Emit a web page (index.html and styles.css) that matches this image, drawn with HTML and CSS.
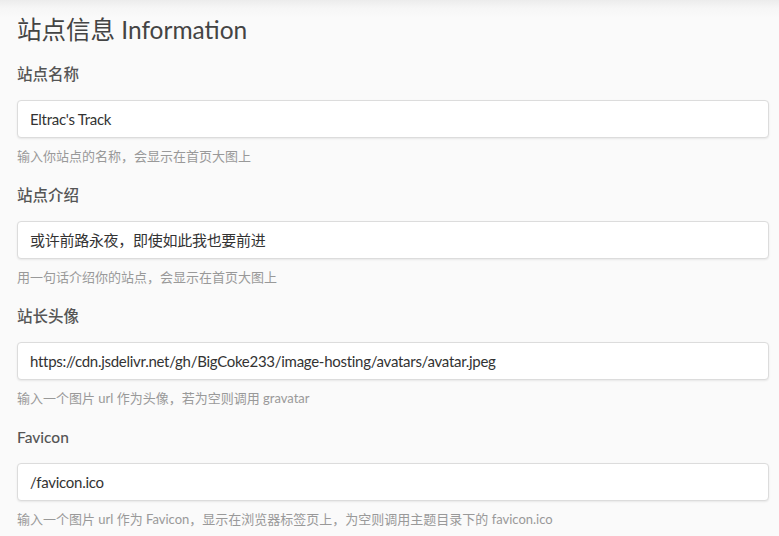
FILE: index.html
```html
<!DOCTYPE html>
<html lang="zh-CN">
<head>
<meta charset="utf-8">
<title>站点信息</title>
<link rel="stylesheet" href="styles.css">
</head>
<body>
<div class="page">
  <h1 class="title">站点信息 Information</h1>
  <div class="field">
    <div class="label">站点名称</div>
    <div class="input">Eltrac's Track</div>
    <div class="hint">输入你站点的名称，会显示在首页大图上</div>
  </div>
  <div class="field">
    <div class="label">站点介绍</div>
    <div class="input">或许前路永夜，即使如此我也要前进</div>
    <div class="hint">用一句话介绍你的站点，会显示在首页大图上</div>
  </div>
  <div class="field">
    <div class="label">站长头像</div>
    <div class="input">https://cdn.jsdelivr.net/gh/BigCoke233/image-hosting/avatars/avatar.jpeg</div>
    <div class="hint">输入一个图片 url 作为头像，若为空则调用 gravatar</div>
  </div>
  <div class="field">
    <div class="label">Favicon</div>
    <div class="input">/favicon.ico</div>
    <div class="hint">输入一个图片 url 作为 Favicon，显示在浏览器标签页上，为空则调用主题目录下的 favicon.ico</div>
  </div>
</div>
</body>
</html>
```
FILE: styles.css
```css
html, body {
  margin: 0;
  padding: 0;
}
body {
  background: #fafafa linear-gradient(to bottom, #ececec 0px, #f6f6f6 8px, #fafafa 18px) no-repeat;
  font-family: Lato, "Noto Sans CJK SC", sans-serif;
  overflow: hidden;
  height: 536px;
}
.page {
  padding: 14px 10px 0 17px;
}
.title {
  margin: 0 0 18px 0;
  font-size: 24.5px;
  line-height: 32px;
  font-weight: 400;
  color: #444;
}
.field {
  margin-bottom: 19px;
}
.label {
  font-size: 15.5px;
  line-height: 20px;
  font-weight: 500;
  color: #555;
  margin-bottom: 16px;
}
.input {
  box-sizing: border-box;
  height: 38px;
  background: #fff;
  border: 1px solid #dcdcdc;
  border-radius: 4px;
  box-shadow: 0 1px 2px rgba(0,0,0,0.08);
  padding: 0 12px;
  font-size: 15px;
  letter-spacing: -0.28px;
  line-height: 36px;
  color: #333;
  white-space: nowrap;
  overflow: hidden;
}
.hint {
  margin-top: 8px;
  font-size: 13px;
  line-height: 20px;
  color: #999;
}
```
